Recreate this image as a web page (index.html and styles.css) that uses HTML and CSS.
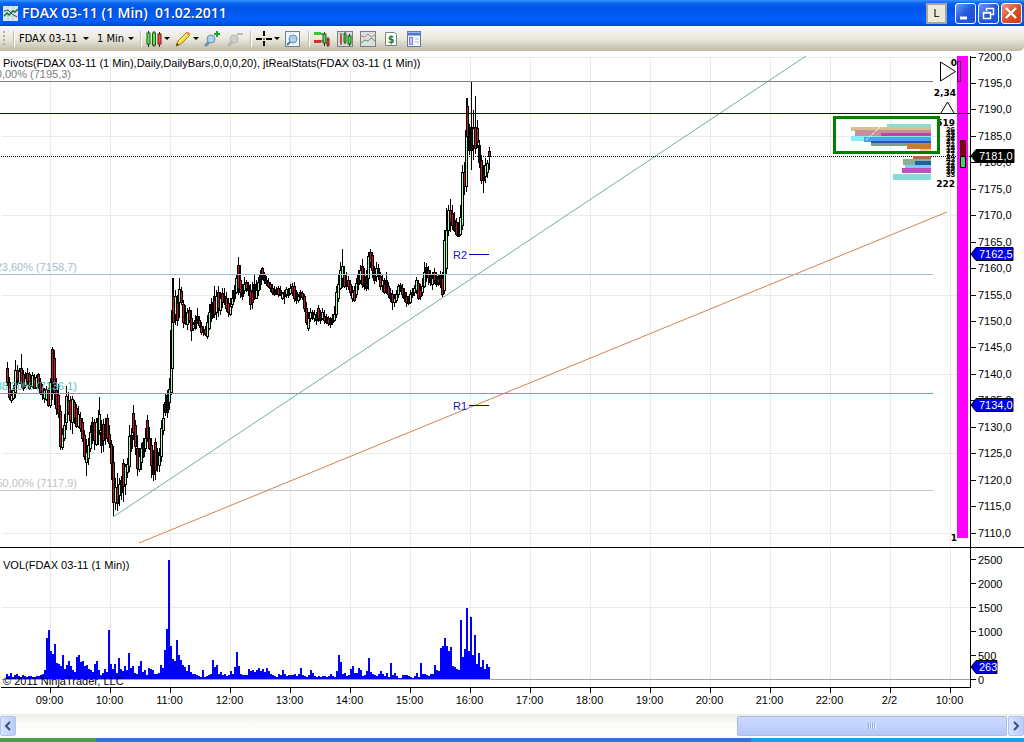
FILE: index.html
```html
<!DOCTYPE html>
<html lang="en">
<head>
    <meta charset="UTF-8">
    <meta name="viewport" content="width=device-width, initial-scale=1.0">
    <title>FDAX 03-11 (1 Min) 01.02.2011</title>
    <link rel="stylesheet" href="styles.css">
</head>
<body>
    <header class="titlebar">
        <svg class="app-icon" width="15" height="15" viewBox="0 0 15 15">
            <rect width="15" height="15" fill="#dce8e8"/>
            <path d="M0 5h15M0 10h15M5 0v15M10 0v15" stroke="#b8ccd8"/>
            <path d="M1 10l3-3 2 2 4-4 2 1 3-3" fill="none" stroke="#187838" stroke-width="1.500"/>
            <path d="M1 5l4-1 4 4 5 3" fill="none" stroke="#285878"/>
        </svg>
        <h1>FDAX 03-11 (1 Min)&nbsp; 01.02.2011</h1>
        <button class="link-button">L</button>
        <div class="window-buttons">
            <button class="win" aria-label="Minimize"><svg width="19" height="19"><path d="M4 14h7" stroke="#fff" stroke-width="3"/></svg></button>
            <button class="win" aria-label="Restore"><svg width="19" height="19"><path d="M7.500 7V4.500h7v6H12M7 4.500h8M4.500 8.500h7v6h-7zM4 9h8" fill="none" stroke="#fff" stroke-width="1.500"/></svg></button>
            <button class="win close" aria-label="Close"><svg width="19" height="19"><path d="M4 4l10 10M14 4L4 14" stroke="#fff" stroke-width="2.400"/></svg></button>
        </div>
    </header>

    <nav class="toolbar">
        <span class="grip"></span>
        <span class="sep"></span>
        <label class="picker instrument"><select aria-label="Instrument"><option>FDAX 03-11</option></select></label>
        <label class="picker interval"><select aria-label="Interval"><option>1 Min</option></select></label>
        <span class="sep"></span>
        <button class="tool menu" aria-label="Chart style">
            <svg width="16" height="16"><path d="M2.500 0v16M8 0v16M13.500 1v15" stroke="#222"/><g stroke="#186018"><rect x="1" y="2" width="3" height="11" fill="#60e050"/><rect x="6.500" y="2" width="3" height="12" fill="#60e050"/></g><rect x="12" y="3" width="3" height="10" fill="#f05040" stroke="#801818"/></svg>
        </button>
        <button class="tool menu" aria-label="Drawing tools">
            <svg width="16" height="16"><path d="M1 15l2-5 9-9 3 3-9 9z" fill="#f8d840" stroke="#a88018"/><path d="M11 2l3 3 1.500-2L13 .5z" fill="#f09060"/><path d="M4 11l8-8" stroke="#fff4a0"/><path d="M1 15l1-3 2 2z" fill="#503010"/></svg>
        </button>
        <button class="tool wide" aria-label="Zoom in">
            <svg width="16" height="16"><path d="M1 15l5-5" stroke="#7090a8" stroke-width="3"/><circle cx="7" cy="8" r="4" fill="#a8d4f0" stroke="#6890b0"/><path d="M13 0v6M10 3h6" stroke="#18a030" stroke-width="2"/></svg>
        </button>
        <button class="tool wide" aria-label="Zoom out" disabled>
            <svg width="16" height="16"><path d="M1 15l5-5" stroke="#b8b8b4" stroke-width="3"/><circle cx="7" cy="8" r="4" fill="#d0d0cc" stroke="#b4b4b0"/><path d="M10 3h6" stroke="#bcbcb8" stroke-width="2"/></svg>
        </button>
        <span class="sep"></span>
        <button class="tool menu" aria-label="Cross hair">
            <svg width="16" height="16"><path d="M8 0v5M8 10v5M0 8h6M10 8h6" stroke="#000" stroke-width="2"/><path d="M7 8h2" stroke="#000"/></svg>
        </button>
        <button class="tool wide" aria-label="Zoom frame">
            <svg width="16" height="16"><rect x=".5" y=".5" width="14" height="15" fill="#f0f4f8" stroke="#708090"/><path d="M2 14l4-4" stroke="#587890" stroke-width="2"/><circle cx="8" cy="8" r="4" fill="#a8d0f0" stroke="#6890b0"/></svg>
        </button>
        <span class="sep"></span>
        <button class="tool wide" aria-label="Chart trader">
            <svg width="16" height="16"><path d="M0 3h9M0 10h9" stroke="#222"/><rect y="1" width="7" height="3" fill="#38c830"/><rect y="9" width="7" height="3" fill="#d83020"/><path d="M10.500 1v14M14 6v10" stroke="#222"/><rect x="9" y="3" width="3" height="9" fill="#60d850" stroke="#186018"/><rect x="13" y="8" width="2" height="6" fill="#e85040" stroke="#801818"/></svg>
        </button>
        <button class="tool wide" aria-label="Data series">
            <svg width="16" height="16"><rect x=".5" y=".5" width="15" height="15" fill="#d8dcd8" stroke="#788080"/><path d="M4 2v12M8 1v12M12.500 3v12" stroke="#222"/><rect x="3" y="5" width="2" height="7" fill="#e04030"/><rect x="7" y="3" width="2" height="8" fill="#50d840" stroke="#186018"/><rect x="11" y="5" width="3" height="8" fill="#50d840" stroke="#186018"/></svg>
        </button>
        <button class="tool wide" aria-label="Indicators">
            <svg width="16" height="16"><rect x=".5" y=".5" width="15" height="15" fill="#d8e0e0" stroke="#788080"/><path d="M1 5l4 1 3-3 3 3 4-2" fill="none" stroke="#d87878"/><path d="M1 12l4-3 3 1 3-3 4 3" fill="none" stroke="#50a068"/></svg>
        </button>
        <button class="tool wide" aria-label="Strategies">
            <svg width="16" height="16"><path d="M2.500 1.500h9l2 2v11h-11z" fill="#f8fcf8" stroke="#788880"/><text x="5" y="12" class="dollar">$</text></svg>
        </button>
        <button class="tool wide" aria-label="Properties">
            <svg width="16" height="16"><rect x="1.500" y=".5" width="13" height="15" fill="#f4f6ff" stroke="#6878a8"/><path d="M2 3h12" stroke="#4878d8" stroke-width="3"/><rect x="3.500" y="6.500" width="3" height="7" fill="#c8c0f8" stroke="#8880d0"/><path d="M9 8h4M9 11h4" stroke="#b8c0d8"/></svg>
        </button>
    </nav>

    <main class="chart">
        <svg class="plot" viewBox="0 51 1024 663" role="img" aria-label="FDAX 03-11 one minute chart">
            <g id="grid"></g>
            <g>
                <rect x="0" y="81" width="933" height="1" fill="#808080"/>
                <rect x="0" y="490" width="933" height="1" fill="#c8c8c8"/>
            </g>
            <g class="level" text-anchor="end">
                <text x="71" y="78" fill="#808080">0,00% (7195,3)</text>
                <text x="77" y="271" fill="#a4bccc">23,60% (7158,7)</text>
                <text x="77" y="487" fill="#c0c0c0">50,00% (7117,9)</text>
            </g>
            <path d="M113 517L806 56" stroke="#78a8a8"/>
            <path d="M139 543L947 212" stroke="#d08450"/>
            <g id="candles"></g>
            <text x="77" y="390" text-anchor="end" fill="#50c4bc">38,20% (7136,1)</text>
            <g>
                <rect x="0" y="393" width="933" height="1" fill="#40b8b4"/>
                <rect x="0" y="274" width="933" height="1" fill="#a4bccc"/>
                <rect x="0" y="113" width="970" height="1" fill="#000090"/>
                <path class="crisp" d="M1 156.500H970" stroke="#000" stroke-dasharray="1 1"/>
                <rect x="469" y="254" width="20" height="1" fill="#0000c0"/>
                <rect x="469" y="405" width="20" height="1" fill="#0000c0"/>
            </g>
            <g fill="#1818c0">
                <text x="453" y="259">R2</text>
                <text x="453" y="410">R1</text>
            </g>
            <text x="3" y="67">Pivots(FDAX 03-11 (1 Min),Daily,DailyBars,0,0,0,20), jtRealStats(FDAX 03-11 (1 Min))</text>

            <!-- volume profile -->
            <g id="profile" class="crisp"></g>
            <path d="M866 140l14-13" stroke="#fff" stroke-dasharray="3 1"/>
            <g id="profileCounts" class="counts" text-anchor="end"></g>
            <g class="stats" text-anchor="end">
                <text x="957" y="66">0</text>
                <text x="956" y="96">2,34</text>
                <text x="955" y="126">519</text>
                <text x="955" y="187">222</text>
                <text x="957" y="541">1</text>
            </g>
            <rect x="834.500" y="117.500" width="104" height="35" fill="none" stroke="#008000" stroke-width="3"/>
            <path d="M940.500 62v19l15-9.500zM941 113l6.500-11 6.500 11" fill="none" stroke="#000"/>
            <g class="crisp">
                <rect x="957" y="56" width="11" height="482" fill="#f0f"/>
                <rect x="957.500" y="61.500" width="3" height="20" fill="none" stroke="#500050"/>
                <rect x="960.500" y="140.500" width="5" height="16" fill="#800018" stroke="#400"/>
                <rect x="960.500" y="156.500" width="5" height="11" fill="#40d850" stroke="#000"/>
                <path d="M958 113.500h12" stroke="#000080"/>
            </g>

            <!-- volume panel -->
            <g id="volume" class="crisp" fill="#00f"></g>
            <text x="3" y="569">VOL(FDAX 03-11 (1 Min))</text>
            <text x="3" y="685">© 2011 NinjaTrader, LLC</text>

            <g class="crisp" stroke="#000">
                <path d="M0 547.500H1024M970.500 56V687M1 687.500H971"/>
            </g>
            <g id="axes"></g>
            <g id="markers"></g>
        </svg>
    </main>

    <div class="scrollbar">
        <button class="arrow" aria-label="Scroll left"><svg width="8" height="10"><path d="M6 1L2 5l4 4" fill="none" stroke="#405078" stroke-width="2"/></svg></button>
        <div class="track"><div class="thumb"><span></span></div></div>
        <button class="arrow" aria-label="Scroll right"><svg width="8" height="10"><path d="M2 1l4 4-4 4" fill="none" stroke="#405078" stroke-width="2"/></svg></button>
    </div>
    <footer class="taskbar"><span class="start"></span><span class="tasks"></span><span class="tray"></span></footer>
    <script src="chart.js"></script>
</body>
</html>
```

FILE: styles.css
```css
body {
    margin: 0;
    background: #fff;
    color: #000;
    font-family: "Liberation Sans", Arial, sans-serif;
    font-size: 11px;
    overflow: hidden;
}
button, select {
    font: inherit;
    color: inherit;
    border: none;
    background: none;
    padding: 0;
    margin: 0;
}
svg {
    display: block;
}
.titlebar {
    display: flex;
    align-items: center;
    height: 26px;
    padding: 0 2px 0 3px;
    background: linear-gradient(#3c94ff 0, #0a66f0 3px, #0054e8 8px, #0060fc 20px, #0050e0 24px, #0040c0 100%);
}
.titlebar h1 {
    flex: 1;
    margin: 0 0 0 4px;
    color: #fff;
    font-family: "Open Sans", "Noto Sans", sans-serif;
    font-size: 14px;
    line-height: 20px;
    font-weight: 600;
    text-shadow: 1px 1px #0838a0;
}
.link-button {
    width: 21px;
    height: 21px;
    border: 2px solid #a8a498;
    background: #ece9d8;
    margin-right: 8px;
}
.window-buttons {
    display: flex;
    gap: 2px;
}
.win {
    width: 21px;
    height: 21px;
    border: 1px solid #fff;
    border-radius: 3px;
    background: linear-gradient(135deg, #6c9cf8, #2458d8 50%, #1c50e0);
}
.close {
    background: linear-gradient(135deg, #f09880, #e05028 50%, #c83c10);
}
.toolbar {
    display: flex;
    align-items: center;
    height: 25px;
    padding-left: 3px;
    background: linear-gradient(#fafaf6, #ebe9de 50%, #bebba8);
    border-radius: 0 0 5px 0;
    font-family: "DejaVu Sans Condensed", "Noto Sans", sans-serif;
}
.grip {
    width: 2px;
    height: 16px;
    margin-right: 8px;
    background: repeating-linear-gradient(#b4b09c 0 2px, transparent 2px 4px);
}
.sep {
    width: 1px;
    height: 16px;
    margin-right: 4px;
    background: #c0bdac;
    border-right: 1px solid #fff;
}
.picker, .menu {
    display: flex;
    align-items: center;
}
.picker::after, .menu::after {
    content: "";
    border: 3px solid transparent;
    border-top-color: #000;
    border-bottom: none;
    margin-left: 2px;
}
.picker select {
    appearance: none;
    width: 100%;
}
.instrument {
    width: 70px;
    margin-right: 8px;
}
.interval {
    width: 37px;
    margin-right: 6px;
}
.menu {
    margin-right: 5px;
}
.wide {
    margin-right: 7px;
}
.dollar {
    font-size: 10px;
    font-weight: bold;
    fill: #187828;
}
.plot {
    width: 100%;
    height: auto;
    font-size: 11px;
}
.crisp {
    shape-rendering: crispEdges;
}
.stats {
    font-family: "DejaVu Sans", sans-serif;
    font-size: 9px;
    font-weight: bold;
}
.counts {
    font-size: 8px;
    font-weight: bold;
}
.scrollbar {
    display: flex;
    height: 24px;
    background: linear-gradient(#eeede5, #fbfbf8 40%, #fefefb);
}
.arrow {
    display: flex;
    align-items: center;
    justify-content: center;
    width: 16px;
    margin: 2px 0;
    border: 1px solid #b0c4f0;
    border-radius: 2px;
    background: linear-gradient(90deg, #d8e4ff, #b8ccf8);
}
.track {
    flex: 1;
    padding: 2px 1px;
}
.thumb {
    display: flex;
    align-items: center;
    justify-content: center;
    box-sizing: border-box;
    width: 27.3%;
    height: 20px;
    margin-left: auto;
    border: 1px solid #a8bce8;
    border-radius: 2px;
    background: linear-gradient(#ccdafe, #c0d0fc 60%, #b4c8f4);
}
.thumb span {
    width: 8px;
    height: 6px;
    background: repeating-linear-gradient(90deg, #8ca8e8 0 1px, #eef4ff 1px 2px);
}
.taskbar {
    display: flex;
    height: 4px;
}
.start {
    width: 96px;
    background: #48a048;
}
.tasks {
    flex: 1;
    background: #2c74e0;
}
.tray {
    width: 273px;
    background: #18a0f0;
}
```

FILE: chart.js
```js
const NS = 'http://www.w3.org/2000/svg';

function add(parent, tag, attrs, text) {
    const el = document.createElementNS(NS, tag);
    for (const key in attrs) el.setAttribute(key, attrs[key]);
    if (text !== undefined) el.textContent = text;
    document.getElementById(parent).appendChild(el);
}

const priceY = price => Math.round(56.5 + (7200 - price) * 5.289) + 0.5;

// grid
for (let x = 50.5; x < 960; x += 60) {
    add('grid', 'path', { d: `M${x} 57V687`, stroke: '#ebebe5' });
}
for (let p = 7200; p >= 7110; p -= 15) {
    add('grid', 'path', { d: `M2 ${priceY(p)}H957`, stroke: '#ebebe5' });
}
add('grid', 'path', { d: 'M2 607.5H970', stroke: '#ebebe5' });
add('grid', 'path', { d: 'M2 679.5H970', stroke: '#a0a0a0' });

// axes
for (let p = 7200; p >= 7110; p -= 5) {
    add('axes', 'path', { d: `M970 ${priceY(p)}h6`, stroke: '#000' });
    add('axes', 'text', { x: 978, y: priceY(p) + 3.5 }, p + ',0');
}
for (let v = 0; v <= 2500; v += 500) {
    const y = 679.5 - Math.round(v * 0.048);
    add('axes', 'path', { d: `M970 ${y}h6`, stroke: '#000' });
    add('axes', 'text', { x: 978, y: y + 4.5 }, v);
}
['09:00', '10:00', '11:00', '12:00', '13:00', '14:00', '15:00', '16:00', '17:00', '18:00',
    '19:00', '20:00', '21:00', '22:00', '2/2', '10:00'].forEach((label, i) => {
    const x = 50.5 + i * 60;
    add('axes', 'path', { d: `M${x} 687v6`, stroke: '#000' });
    add('axes', 'text', { x: x - 1, y: 704, 'text-anchor': 'middle' }, label);
});

// price markers on the axis
[[156, '7181,0', '#000', 44], [254, '7162,5', '#0000f0', 43], [405, '7134,0', '#0000f0', 43], [667, '263', '#0000f0', 27]].forEach(([y, label, fill, w]) => {
    add('markers', 'path', { d: `M971 ${y}l5-6.500h${w - 6}v13h-${w - 6}z`, fill, stroke: '#000' });
    add('markers', 'text', { x: 979, y: y + 4, fill: '#fff' }, label);
});

// x, high, body top, body bottom, low, colour
const candles = `
7 362 368 382 386 r|9 377 382 397 400 r|11 390 395 400 403 g|13 385 390 398 400 g|15 360 370 392 398 g
17 365 370 380 385 r|19 368 371 382 384 g|21 354 368 383 388 r|23 370 374 388 391 r|25 372 378 385 388 g
27 368 373 381 385 r|29 372 374 388 390 r|32 372 375 386 388 g|34 374 378 388 389 r|36 375 377 387 389 g
38 373 374 384 389 r|40 378 382 392 395 r|42 384 388 394 400 r|44 388 390 398 403 g|46 386 389 399 401 g
48 388 390 405 407 r|50 378 382 405 408 g|52 347 349 382 400 r|54 350 358 392 405 r|56 378 390 408 415 r
58 384 395 413 418 r|60 405 411 446 450 r|62 428 434 447 450 g|64 414 425 438 441 g|66 386 396 422 430 g
68 392 400 412 415 r|70 396 400 420 430 r|72 396 399 422 434 g|74 400 402 418 424 r|76 404 408 426 428 r
78 406 414 426 428 g|80 412 418 428 432 r|82 418 422 438 442 r|84 430 435 456 460 r|86 439 452 462 476 g
88 438 445 458 465 g|90 425 432 448 452 g|92 417 422 436 444 k|94 419 422 440 450 r|96 418 422 444 446 g
98 410 418 430 445 g|99 397 414 430 435 g|101 420 432 445 453 k|103 419 424 440 452 r|105 418 424 437 445 k
107 414 418 438 442 r|109 425 434 443 448 r|111 440 444 463 480 r|113 446 462 502 516 r|115 478 487 502 510 g
117 473 487 503 511 r|119 478 484 495 506 g|121 476 480 492 500 k|123 459 463 486 502 r|125 464 466 484 495 g
127 458 464 472 478 g|129 425 436 466 472 g|131 428 435 448 452 k|133 405 413 432 440 r|135 420 425 446 455 r
137 435 448 468 476 r|139 448 456 469 472 g|141 443 448 462 470 g|143 438 442 456 458 k|145 428 438 448 452 g
147 415 420 438 442 r|149 427 438 448 450 r|151 438 445 465 478 r|153 450 462 474 481 k|155 438 442 470 480 r
157 448 452 464 472 k|159 448 455 465 472 g|161 420 428 456 462 g|163 404 418 430 435 g|165 393 402 412 416 k
167 390 395 412 418 k|169 378 389 402 410 g|171 320 330 392 395 g|172 278 310 368 370 g|173 278 296 322 330 r
175 290 296 314 325 g|177 295 303 320 326 r|179 278 289 302 318 g|181 287 291 302 305 r|183 300 304 322 328 r
185 305 315 323 325 k|187 308 312 324 330 g|189 307 310 320 323 r|191 310 318 330 341 r|193 322 324 328 331 g
195 315 320 328 330 k|197 308 316 320 324 k|199 316 320 325 328 r|201 322 326 332 335 r|203 326 330 332 336 k
205 326 329 334 336 r|207 315 322 336 339 g|209 304 312 328 330 g|211 298 304 318 322 k|213 296 302 310 318 g
214 286 300 314 318 r|216 290 296 312 320 g|218 286 292 308 317 r|220 292 298 310 315 g|222 288 293 302 308 r
224 288 296 300 305 k|226 292 298 308 312 r|228 298 303 312 317 r|230 298 306 314 316 g|232 290 298 304 308 g
234 285 290 298 302 k|236 275 278 292 294 g|238 257 265 288 295 r|240 265 280 292 298 r|242 284 288 296 300 k
244 277 284 290 294 g|246 280 282 288 292 r|248 282 285 290 296 k|250 284 290 304 310 r|252 282 292 302 309 r
254 275 284 296 300 k|256 280 290 298 299 g|258 277 282 290 296 g|260 270 275 284 290 k|262 267 268 275 280 r
264 272 275 280 284 k|266 276 280 283 286 k|268 278 282 286 288 r|270 282 284 288 292 r|272 284 288 292 295 r
274 286 290 294 296 k|276 287 289 292 295 k|278 286 288 294 297 r|280 286 290 295 296 k|282 292 293 298 300 g
284 290 292 296 304 k|286 287 289 294 298 g|288 288 291 295 298 k|290 284 288 293 295 g|292 283 286 292 296 r
294 282 286 298 302 r|296 290 292 300 304 k|298 294 296 300 303 g|300 290 292 296 300 k|302 291 293 297 300 r
304 294 296 308 312 r|306 302 308 322 325 r|308 312 318 328 331 g|310 308 312 318 322 g|312 310 312 316 320 k
314 310 314 318 322 g|316 312 316 320 325 k|318 305 308 318 322 r|320 310 314 320 324 k|322 308 312 318 320 g
324 310 316 320 324 r|326 314 317 322 324 k|328 316 318 323 326 r|330 317 320 324 328 k|332 314 318 322 325 k
334 306 314 320 322 g|336 286 292 314 318 g|338 275 284 298 302 g|340 262 270 288 290 g|342 249 266 278 288 g
344 266 274 286 288 r|346 272 280 284 290 k|348 276 280 286 290 r|350 280 284 292 296 r|352 286 292 298 302 g
354 286 290 300 302 r|356 278 283 294 298 g|358 270 274 284 290 k|360 265 270 280 284 g|362 259 266 284 288 r
364 268 276 286 290 k|366 270 278 288 291 k|368 252 256 278 290 g|370 249 252 262 268 r|372 252 255 270 278 r
374 266 270 280 284 k|376 262 268 276 282 g|378 264 268 275 280 k|380 272 276 286 290 r|382 274 280 285 292 g
384 278 284 292 294 r|386 272 280 292 294 k|388 282 286 294 298 r|390 288 293 298 302 k|392 290 294 302 310 r
394 294 298 302 307 g|396 290 294 300 303 g|398 284 286 294 298 g|400 283 285 290 292 k|402 284 288 294 298 r
404 288 292 298 302 k|406 292 296 302 307 r|408 296 299 303 305 k|410 290 294 302 304 g|412 288 292 295 298 k
414 285 288 292 296 g|416 277 280 290 294 g|418 280 283 298 300 r|420 284 290 296 300 r|422 278 286 292 296 g
424 262 272 286 288 g|426 263 267 275 282 k|428 266 270 277 285 r|430 270 274 282 286 k|432 272 278 284 290 g
434 268 272 280 284 r|436 272 276 284 287 k|438 274 278 282 286 r|440 271 274 284 288 k|442 272 278 294 297 r
444 230 240 290 294 g|446 208 230 268 275 g|448 205 210 230 236 g|450 199 210 222 232 r|452 205 213 225 230 r
454 212 220 230 232 k|456 218 222 234 236 r|458 222 228 236 237 k|460 205 217 234 236 g|462 165 172 225 230 g
464 162 172 186 195 r|466 98 130 186 192 g|467 98 106 136 152 r|469 124 134 150 155 k|471 82 127 150 170 k
473 110 128 145 160 g|475 96 127 148 154 r|477 120 128 142 148 r|479 140 145 162 168 k|481 155 160 180 184 r
483 165 172 180 193 k|485 158 165 176 183 g|487 160 163 172 178 g|489 147 151 156 170 r`;
const fills = { r: '#c01828', g: '#b0f8b8', k: '#101010' };
candles.trim().split(/[|\n]/).forEach(row => {
    const [x, high, top, bottom, low, colour] = row.split(' ').map((v, i) => i < 5 ? +v : v);
    add('candles', 'rect', { x, y: high, width: 1, height: low - high });
    add('candles', 'rect', { x: x - 1, y: top, width: 3, height: bottom - top + 1 });
    add('candles', 'rect', { x, y: top + 1, width: 1, height: bottom - top - 1, fill: fills[colour] });
});

// bar heights, one bar every two pixels
const volume = [6, 4, 5, 3, 6, 2, 4, 5, 3, 2, 4, 3, 2, 3, 3, 2, 2, 3, 3, 4, 5, 9,
    41, 49, 28, 25, 35, 16, 15, 13, 24, 10, 14, 18, 13, 9, 7, 22, 24, 17, 18, 13, 14, 10, 9, 7, 15, 18, 9,
    4, 6, 10, 7, 49, 15, 10, 15, 6, 21, 10, 8, 13, 9, 26, 11, 13, 6, 5, 13, 18, 7, 9, 4, 11, 10, 9, 5, 5, 6, 14, 11,
    29, 50, 119, 33, 20, 18, 39, 24, 19, 14, 12, 8, 14, 7, 5, 5, 4, 3, 2, 9, 2, 3, 4, 5, 19, 12, 14, 5, 7, 4, 5, 3, 4, 8, 5,
    12, 27, 13, 5, 4, 4, 4, 10, 8, 9, 7, 9, 11, 8, 10, 7, 11, 8, 5, 4, 3, 2, 5, 4, 9, 5, 3, 4, 4, 4, 5, 3, 5,
    11, 4, 3, 2, 4, 9, 6, 3, 2, 3, 2, 3, 3, 2, 3, 5, 3, 2, 8, 24, 17, 5, 6, 3, 4, 10, 13, 6, 6, 11, 9, 3, 4, 8,
    21, 7, 5, 4, 3, 5, 8, 5, 3, 6, 2, 16, 4, 6, 3, 1, 1, 4, 4, 4, 3, 2, 1, 3, 6, 2, 16, 5, 5, 4, 3, 5, 5, 14, 9,
    8, 31, 33, 41, 33, 28, 32, 13, 12, 10, 9, 59, 22, 30, 71, 28, 62, 24, 44, 15, 26, 12, 19, 10, 15, 12];
const lastBar = 488;
volume.forEach((h, i) => {
    const x = lastBar - (volume.length - 1 - i) * 2;
    if (x >= 5) add('volume', 'rect', { x, y: 679 - h, width: 2, height: h });
});

// left edge, top, height, colour
[[887, 124, 4, '#8cdcd4'], [851, 127, 4, '#d8c090'], [855, 130, 6, '#c89098'], [881, 133, 4, '#c040b0'],
    [851, 136, 5, '#80f0f8'], [864, 137, 5, '#50a0f8'], [871, 141, 3, '#2858a8'], [871, 143, 3, '#7ca08c'],
    [907, 144, 5, '#d07830'], [920, 149, 4, '#ffc890'],
    [913, 156, 5, '#a87040'], [903, 159, 6, '#88b090'], [915, 161, 4, '#2060a0'], [905, 165, 3, '#80c8f8'],
    [902, 168, 5, '#c050c0'], [893, 174, 6, '#88dcd8']].forEach(([x, y, height, fill]) => {
    add('profile', 'rect', { x, y, width: 931 - x, height, fill });
});
[26, 38, 43, 36, 37, 52, 18, 32, 17, 24, 43, 32, 28, 39, 30, 33].forEach((n, i) => {
    add('profileCounts', 'text', { x: 955, y: 132 + i * 3 }, n);
});
```
